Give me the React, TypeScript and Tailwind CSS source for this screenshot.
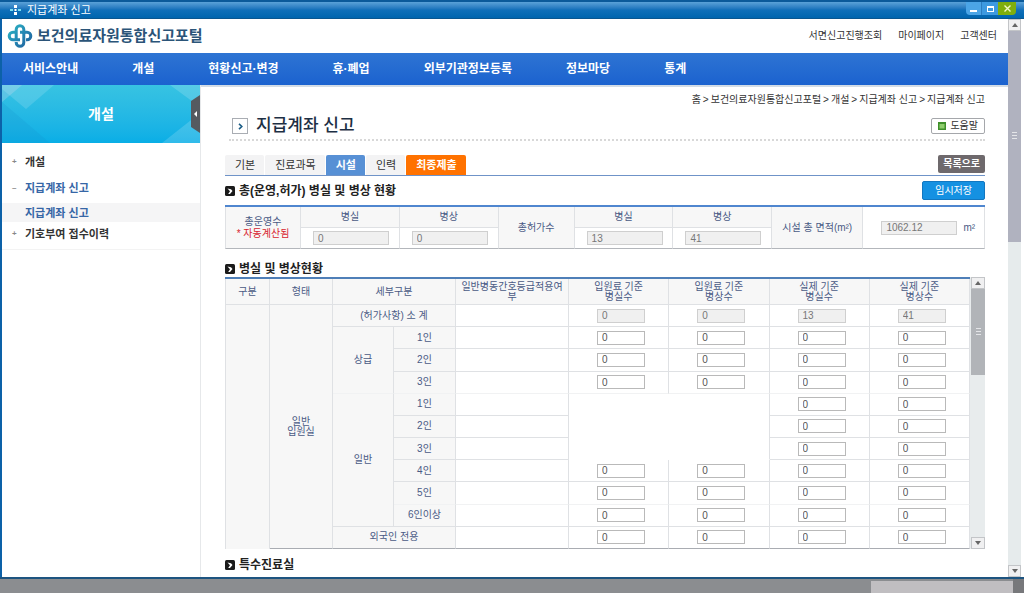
import { useState } from 'react';

const menus = ['서비스안내', '개설', '현황신고·변경', '휴·폐업', '외부기관정보등록', '정보마당', '통계'];
const tabs = ['기본', '진료과목', '시설', '인력', '최종제출'];
const path = ['홈', '보건의료자원통합신고포털', '개설', '지급계좌 신고', '지급계좌 신고'];

type Row = { name: string; group?: string; span?: number; blank?: number; noFee?: boolean; faint?: boolean };

const rows: Row[] = [
  { name: '1인', group: '상급', span: 3 },
  { name: '2인' },
  { name: '3인', faint: true },
  { name: '1인', group: '일반', span: 6, blank: 3, noFee: true },
  { name: '2인', noFee: true },
  { name: '3인', noFee: true },
  { name: '4인' },
  { name: '5인', faint: true },
  { name: '6인이상' },
];

const th = 'border-r border-b border-[#dfe1e4] bg-[#f7f7f7] text-center font-normal text-[#4a5a85]';
const td = 'border-r border-b border-[#dfe1e4] bg-white';

function Logo() {
  return (
    <svg width="26" height="26" viewBox="0 0 26 26" fill="none" strokeWidth="3">
      <defs>
        <linearGradient id="lg" x1="0" y1="0" x2="26" y2="26" gradientUnits="userSpaceOnUse">
          <stop offset="0.1" stopColor="#2cb7c4" />
          <stop offset="0.5" stopColor="#2588b4" />
          <stop offset="0.9" stopColor="#1f5f9c" />
        </linearGradient>
      </defs>
      <path d="M9.200 16V6.500a3.800 3.800 0 0 1 7.600 0V11" stroke="url(#lg)" />
      <path d="M10 9.200H6a3.800 3.800 0 0 0 0 7.600h7" stroke="url(#lg)" />
      <path d="M16.800 10v9.500a3.800 3.800 0 0 1-7.600 0V19" stroke="url(#lg)" />
      <path d="M13 9.200h7a3.800 3.800 0 0 1 0 7.600h-1" stroke="url(#lg)" />
    </svg>
  );
}

function SectionTitle({ children }: { children: React.ReactNode }) {
  return (
    <h2 className="flex items-center gap-1 text-xs leading-4 font-bold text-[#222]">
      <svg width="10" height="10" viewBox="0 0 10 10">
        <rect width="10" height="10" rx="1.5" fill="#1b1b1b" />
        <path d="M2.5 2.5 6 3.2 7.5 5 5 8H3.2L5 5.2z" fill="#fff" />
      </svg>
      {children}
    </h2>
  );
}

function ScrollButton({ down }: { down?: boolean }) {
  return (
    <button
      aria-label={down ? '아래로' : '위로'}
      className="flex h-3 w-full shrink-0 items-center justify-center border border-[#c3c5c8] bg-[#f0f0f1]"
    >
      <svg width="6" height="4" viewBox="0 0 6 4">
        <path d={down ? 'M0 0h6L3 4z' : 'M0 4h6L3 0z'} fill="#666" />
      </svg>
    </button>
  );
}

function Grip() {
  return (
    <svg width="5" height="9" viewBox="0 0 5 9" stroke="#e4e5e8">
      <path d="M0 .5h5M0 3.5h5M0 6.5h5" />
    </svg>
  );
}

function Num({ label, value = '0', wide, off }: { label: string; value?: string; wide?: boolean; off?: boolean }) {
  return (
    <input
      type="text"
      aria-label={label}
      defaultValue={value}
      readOnly={off}
      className={`block h-[14px] border px-1 text-[10px] leading-3 ${wide ? 'w-[76px]' : 'w-12'} ${
        off ? 'border-[#cfcfcf] bg-[#f0f0f0] text-[#777]' : 'border-[#b9b9b9] bg-white text-[#555]'
      }`}
    />
  );
}

function Summary() {
  return (
    <table className="h-11 w-full table-fixed border-separate border-spacing-0 border-t-2 border-[#4f86cf] text-[10px] leading-3">
      <colgroup>
        <col className="w-[10%]" />
        <col className="w-[13%]" />
        <col className="w-[13%]" />
        <col className="w-[10%]" />
        <col className="w-[13%]" />
        <col className="w-[13%]" />
        <col className="w-[12%]" />
        <col />
      </colgroup>
      <tbody>
        <tr>
          <th rowSpan={2} className={`${th} border-l border-b-[#b3b6bb]`}>
            총운영수
            <br />
            <span className="text-[#d8242f]">* 자동계산됨</span>
          </th>
          <th className={`${th} h-[21px]`}>병실</th>
          <th className={th}>병상</th>
          <th rowSpan={2} className={`${th} border-b-[#b3b6bb]`}>총허가수</th>
          <th className={th}>병실</th>
          <th className={th}>병상</th>
          <th rowSpan={2} className={`${th} border-b-[#b3b6bb]`}>시설 총 면적(m²)</th>
          <td rowSpan={2} className={`${td} border-b-[#b3b6bb]`}>
            <div className="flex items-center gap-1.5 pl-[18px] text-[#4a5a85]">
              <Num label="시설 총 면적" value="1062.12" wide off />
              m²
            </div>
          </td>
        </tr>
        <tr>
          {[
            ['총운영수 병실', '0'],
            ['총운영수 병상', '0'],
            ['총허가수 병실', '13'],
            ['총허가수 병상', '41'],
          ].map(([label, value]) => (
            <td key={label} className={`${td} border-b-[#b3b6bb] pl-3`}>
              <Num label={label} value={value} wide off />
            </td>
          ))}
        </tr>
      </tbody>
    </table>
  );
}

function Rooms() {
  const feeCols = ['입원료 기준 병실수', '입원료 기준 병상수'];
  const realCols = ['실제 기준 병실수', '실제 기준 병상수'];
  const cols = [...feeCols, ...realCols];
  const total = ['0', '0', '13', '41'];

  return (
    <table className="h-[272px] w-full table-fixed border-separate border-spacing-0 border-t-2 border-[#4f7fb8] text-[10px] leading-[10px]">
      <colgroup>
        <col className="w-[45px]" />
        <col className="w-[63px]" />
        <col className="w-[61px]" />
        <col className="w-[62px]" />
        <col className="w-[113px]" />
        <col />
        <col />
        <col />
        <col />
      </colgroup>
      <thead>
        <tr>
          <th className={`${th} h-[26px] border-l`}>구분</th>
          <th className={th}>형태</th>
          <th colSpan={2} className={th}>세부구분</th>
          <th className={`${th} px-[3px]`}>일반병동간호등급적용여부</th>
          {cols.map((c) => (
            <th key={c} className={`${th} px-4 break-keep`}>{c}</th>
          ))}
        </tr>
      </thead>
      <tbody>
        <tr>
          <th rowSpan={11} className={`${th} border-b-0 border-l`} />
          <th rowSpan={11} className={`${th} border-b-[#a9acb2]`}>
            일반
            <br />
            입원실
          </th>
          <th colSpan={2} className={`${th} h-[22px]`}>(허가사항) 소 계</th>
          <td className={td} />
          {cols.map((c, i) => (
            <td key={c} className={`${td} pl-7`}>
              <Num label={`소계 ${c}`} value={total[i]} off />
            </td>
          ))}
        </tr>
        {rows.map((r, i) => {
          const line = r.faint ? 'border-b-[#f1f2f3]' : '';
          return (
            <tr key={i}>
              {r.group && (
                <th rowSpan={r.span} className={`${th} ${r.group === '상급' ? 'border-b-[#f1f2f3]' : ''}`}>{r.group}</th>
              )}
              <th className={`${th} ${line} h-[22px]`}>{r.name}</th>
              <td className={`${td} ${line}`} />
              {r.blank && <td colSpan={2} rowSpan={r.blank} className={`${td} border-b-white`} />}
              {(r.noFee ? realCols : cols).map((c) => (
                <td key={c} className={`${td} ${line} pl-7`}>
                  <Num label={`${r.name} ${c}`} />
                </td>
              ))}
            </tr>
          );
        })}
        <tr>
          <th colSpan={2} className={`${th} h-[22px] border-b-[#a9acb2]`}>외국인 전용</th>
          <td className={`${td} border-b-[#a9acb2]`} />
          {cols.map((c) => (
            <td key={c} className={`${td} border-b-[#a9acb2] pl-7`}>
              <Num label={`외국인 전용 ${c}`} />
            </td>
          ))}
        </tr>
      </tbody>
    </table>
  );
}

function Sidebar() {
  return (
    <aside className="w-[199px] shrink-0 border-r border-[#e6e8ea] text-[11px] leading-4 font-bold text-[#333]">
      <div className="relative flex h-[58px] items-center justify-center overflow-hidden bg-gradient-to-b from-[#37c3e2] to-[#08aee6]">
        <svg className="absolute inset-0 h-full w-full" viewBox="0 0 198 58" preserveAspectRatio="none">
          <path d="M0 0h20L0 17z" fill="#fff" opacity=".3" />
          <path d="M20 0 0 17l48 41H0V0z" fill="#1590cf" opacity=".2" />
          <path d="M52 0 24 24 0 4V0z" fill="#fff" opacity=".14" />
          <path d="M198 28v30h-38zM168 0h30v22z" fill="#fff" opacity=".16" />
        </svg>
        <span className="relative text-sm text-white">개설</span>
        <button aria-label="메뉴 접기" className="absolute top-2.5 right-0 h-[38px] w-[9px]">
          <svg width="9" height="38" viewBox="0 0 9 38">
            <path d="M9 0v38L0 32V6z" fill="#555a60" />
            <path d="M6 16 3 19l3 3z" fill="#fff" />
          </svg>
        </button>
      </div>
      <nav className="border-b border-[#f3f3f3] pb-1.5">
        <a href="#" className="mt-2.5 flex h-[18px] items-center">
          <span className="w-[23px] pl-2.5 text-[8px] text-[#888]">+</span>개설
        </a>
        <a href="#" className="mt-2 flex h-[18px] items-center text-[#3666a6]">
          <span className="w-[23px] pl-2.5 text-[8px] text-[#888]">–</span>지급계좌 신고
        </a>
        <a href="#" className="mt-1.5 flex h-[19px] items-center bg-[#f5f5f6] pl-[23px] text-[#3666a6]">지급계좌 신고</a>
        <a href="#" className="mt-[3px] flex h-[18px] items-center">
          <span className="w-[23px] pl-2.5 text-[8px] text-[#888]">+</span>기호부여 접수이력
        </a>
      </nav>
    </aside>
  );
}

export default function App() {
  const [tab, setTab] = useState('시설');

  const tabColor = (t: string) => {
    if (t === '최종제출') return 'bg-[#ff7200] font-bold text-white';
    if (t === tab) return 'bg-[#5790d5] font-bold text-white';
    return 'bg-[#f3f3f4] text-[#333]';
  };

  return (
    <div className="flex h-screen flex-col overflow-hidden bg-white font-['Liberation_Sans','Noto_Sans_CJK_KR',sans-serif] text-[#333]">
      {/* 창 제목 */}
      <div className="flex h-[19px] shrink-0 items-center border-t-2 border-b border-t-[#0b5a9a] border-b-[#0a568f] bg-gradient-to-b from-[#5aa2d8] via-[#0f6fb9] to-[#0065ae] pr-2 pl-2.5 text-[11px] leading-4 text-white">
        <svg width="11" height="10" viewBox="0 0 11 10" className="mr-1.5">
          <path d="M4 0h3v3H4zM4 7h3v3H4z" fill="#fff" />
          <path d="M0 4h3v2H0zM8 4h3v2H8z" fill="#7be0f0" />
          <path d="M4.500 4h2v2h-2z" fill="#fff" />
        </svg>
        <span className="flex-1">지급계좌 신고</span>
        <div className="flex h-[13px] self-start">
          <button aria-label="최소화" className="flex w-4 items-end justify-center rounded-bl-sm border-r border-[#2b7cc0] bg-[#4ba5e6] pb-[3px]">
            <span className="h-0.5 w-[7px] bg-white" />
          </button>
          <button aria-label="최대화" className="flex w-4 items-center justify-center bg-[#3d9ae0]">
            <span className="h-1.5 w-[7px] border border-t-2 border-white" />
          </button>
          <button aria-label="닫기" className="flex w-[18px] items-center justify-center rounded-br-sm bg-[#7fae0c]">
            <svg width="7" height="7" viewBox="0 0 7 7" stroke="#f2f7c4" strokeWidth="1.4">
              <path d="m.5.5 6 6M6.500.5l-6 6" />
            </svg>
          </button>
        </div>
      </div>

      <div className="flex min-h-0 flex-1 border-l-2 border-[#0c61a8]">
        <div className="flex min-w-0 flex-1 flex-col">
          <header className="flex h-[34px] shrink-0 items-center pr-[11px] pl-[5px]">
            <Logo />
            <a href="#" className="ml-1 flex-1 text-[15px] leading-5 font-bold text-[#2b5478]">보건의료자원통합신고포털</a>
            <div className="flex gap-4 text-[10px] leading-4">
              <a href="#">서면신고진행조회</a>
              <a href="#">마이페이지</a>
              <a href="#">고객센터</a>
            </div>
          </header>
          <nav className="flex h-8 shrink-0 items-center gap-[54px] bg-gradient-to-b from-[#2e74d3] to-[#1b62cf] pl-[21px] text-xs leading-4 font-bold whitespace-nowrap text-white">
            {menus.map((m) => (
              <a key={m} href="#">{m}</a>
            ))}
          </nav>

          <div className="flex min-h-0 flex-1">
            <Sidebar />
            <main className="min-w-0 flex-1 overflow-hidden border-t-2 border-[#d3dce6] pr-[23px] pl-6">
              <div className="flex h-[26px] items-center justify-end gap-0.5 text-[10px] leading-4">
                {path.map((p, i) => (
                  <span key={i} className="flex gap-0.5">
                    {i > 0 && <span>&gt;</span>}
                    {p}
                  </span>
                ))}
              </div>

              <div className="ml-1 flex h-7 items-center justify-between border-b-2 border-dotted border-[#d8d8d8]">
                <h1 className="flex items-center gap-2 text-[17px] leading-6 font-medium text-[#1d2f44]">
                  <span className="ml-[3px] flex h-4 w-4 items-center justify-center border border-[#a9adb3]">
                    <svg width="5" height="7" viewBox="0 0 5 7" fill="none" stroke="#1b5d86" strokeWidth="1.600">
                      <path d="m1 .8 2.800 2.700L1 6.200" />
                    </svg>
                  </span>
                  지급계좌 신고
                </h1>
                <button className="flex h-4 items-center gap-1 rounded-xs border border-[#a5a7ab] bg-white px-1.5 text-[10px] leading-3">
                  <svg width="8" height="8" viewBox="0 0 8 8">
                    <path d="M0 0h8v8H0z" fill="#3f8f2b" />
                    <path d="M1.500 2h5v4.500h-5z" fill="#8fce6d" />
                  </svg>
                  도움말
                </button>
              </div>

              <div className="mt-3.5 flex h-[21px] items-stretch border-b border-[#6f93c8] text-[11px] leading-4">
                <div className="flex flex-1 gap-px">
                  {tabs.map((t) => (
                    <button key={t} onClick={() => setTab(t)} className={`rounded-t-xs pr-[9px] pl-2.5 ${tabColor(t)}`}>
                      {t}
                    </button>
                  ))}
                </div>
                <button className="h-[18px] rounded-xs bg-[#6e696c] px-[5px] text-[10px] font-bold text-white">목록으로</button>
              </div>

              <div className="flex h-[29px] items-center justify-between">
                <SectionTitle>총(운영,허가) 병실 및 병상 현황</SectionTitle>
                <button className="h-[19px] rounded-xs border border-[#1377c0] bg-[#1591e2] px-3 text-[10px] leading-4 text-white">임시저장</button>
              </div>
              <Summary />

              <div className="flex h-7 items-end">
                <SectionTitle>병실 및 병상현황</SectionTitle>
              </div>
              <div className="flex">
                <div className="min-w-0 flex-1">
                  <Rooms />
                </div>
                <div className="flex w-[15px] shrink-0 flex-col bg-[#e8eced] pl-px">
                  <ScrollButton />
                  <div className="flex h-[86px] items-center justify-center bg-[#b1b4b8]">
                    <Grip />
                  </div>
                  <div className="flex-1" />
                  <ScrollButton down />
                </div>
              </div>

              <div className="flex h-8 items-center">
                <SectionTitle>특수진료실</SectionTitle>
              </div>
            </main>
          </div>
        </div>

        <div className="mr-[3px] flex w-[13px] shrink-0 flex-col bg-[#e6ebec]">
          <ScrollButton />
          <div className="flex h-[211px] items-center justify-center bg-[#b0b2bf]">
            <Grip />
          </div>
          <div className="flex-1" />
          <ScrollButton down />
        </div>
      </div>

      <div className="flex h-4 shrink-0 justify-end border-t-2 border-[#1d5480] bg-[#8b8d90]">
        <div className="mt-0.5 w-[142px] bg-[#c0bec1]" />
        <div className="w-[11px] bg-[#77787b]" />
      </div>
    </div>
  );
}
